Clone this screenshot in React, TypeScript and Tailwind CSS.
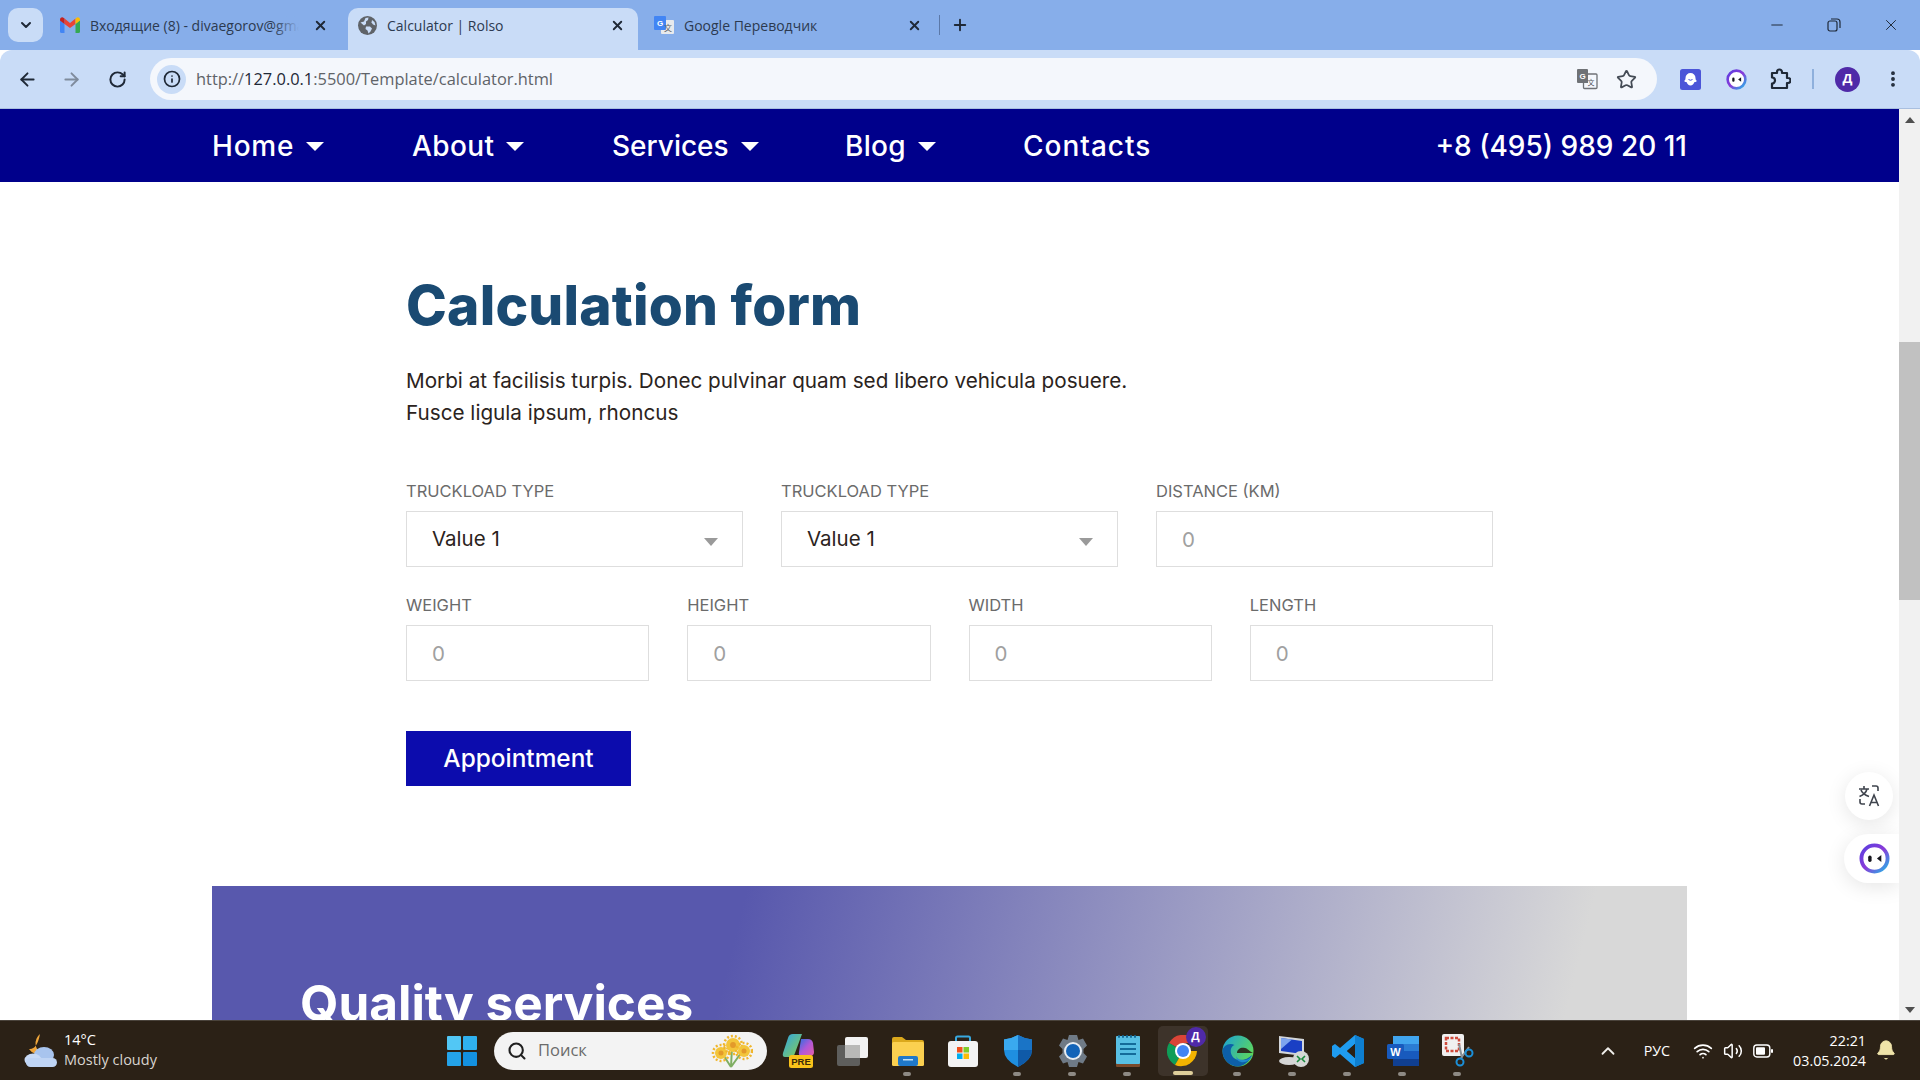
import {
  ArrowLeft,
  ArrowRight,
  Bell,
  ChevronDown,
  ChevronUp,
  EllipsisVertical,
  Info,
  Minus,
  Plus,
  RotateCw,
  Search,
  Star,
  Volume2,
  Wifi,
  X,
} from "lucide-react";

const body = "[font-family:Inter,sans-serif]";
const head = "[font-family:Inter,sans-serif]";
const ui = "[font-family:'Open_Sans',sans-serif]";

function GmailIcon() {
  return (
    <svg width="20" height="16" viewBox="0 0 20 16">
      <path d="M0 3v11.500q0 1.500 1.500 1.500H4.500V7z" fill="#4285f4" />
      <path d="M20 3v11.500q0 1.500-1.500 1.500H15.500V7z" fill="#34a853" />
      <path d="M4.500 7 10 11l5.500-4V1.500L10 6 4.500 1.500z" fill="#ea4335" />
      <path d="M0 3q0-3 3-2.600L4.500 1.500V7L0 3.500z" fill="#c5221f" />
      <path d="M20 3q0-3-3-2.600L15.500 1.500V7L20 3.500z" fill="#fbbc04" />
    </svg>
  );
}

function GlobeIcon() {
  return (
    <svg width="19" height="19" viewBox="0 0 19 19">
      <circle cx="9.500" cy="9.500" r="9.500" fill="#5f6368" />
      <path d="M2.500 6.500 6 5.500l1.500-3.500 3-.5-.5 2.500-2 1.500v2.500L6 9.500z" fill="#c9dcf7" />
      <path d="M8 10.500h4l2 2-1.500 3-2 2-1-3-2-1.500z" fill="#c9dcf7" />
      <path d="M14 4l2.500 2 1 3.500-2.500-1-1.500-2z" fill="#c9dcf7" />
    </svg>
  );
}

function TranslateTabIcon() {
  return (
    <svg width="22" height="22" viewBox="0 0 22 22">
      <rect x="8" y="6" width="13" height="14" rx="1" fill="#e8eaed" />
      <rect x="1" y="2" width="12" height="14" rx="1" fill="#4285f4" />
      <text x="7" y="12" fontSize="8" fill="#fff" textAnchor="middle" fontFamily="Liberation Sans" fontWeight="700">G</text>
      <text x="15" y="17" fontSize="8" fill="#5f6368" textAnchor="middle" fontFamily="Noto Sans CJK SC">文</text>
    </svg>
  );
}

function OmniTranslateIcon() {
  return (
    <svg width="22" height="22" viewBox="0 0 22 22">
      <rect x="7.500" y="6" width="13.500" height="14.500" rx="1" fill="#f4f7fc" stroke="#6f7276" strokeWidth="1.300" />
      <path d="M2 1h9q1 0 1 1v13H2q-1 0-1-1V2q0-1 1-1z" fill="#6f7276" />
      <text x="6.500" y="11" fontSize="8" fill="#fff" textAnchor="middle" fontFamily="Liberation Sans" fontWeight="700">G</text>
      <text x="15" y="16.500" fontSize="7" fill="#55585c" textAnchor="middle" fontFamily="Noto Sans CJK SC">文</text>
    </svg>
  );
}

function GhostExt() {
  return (
    <svg width="21" height="21" viewBox="0 0 21 21">
      <rect width="21" height="21" rx="2.500" fill="#4b55d8" />
      <path d="M10.500 4a5 5 0 0 1 5 5c0 1.500.5 2.500 1.500 3-1 1-2 1-2.500 1-.6 1.800-2.200 3.500-4 3.500s-3.400-1.700-4-3.500c-.5 0-1.500 0-2.500-1 1-.5 1.500-1.500 1.500-3a5 5 0 0 1 5-5z" fill="#fff" />
      <path d="M8.500 10.500q2 1.500 4 0" stroke="#4b55d8" fill="none" strokeWidth="1" />
    </svg>
  );
}

function ExtensionsIcon() {
  return (
    <svg width="22" height="22" viewBox="0 0 22 22" fill="none" stroke="#1f2937" strokeWidth="2.200" strokeLinejoin="round">
      <path d="M3 5h5V4a2.500 2.500 0 0 1 5 0v1h5v5h1a2.500 2.500 0 0 1 0 5h-1v5H3v-4.500a3 3 0 0 0 0-6z" />
    </svg>
  );
}

function FaceLogo({ size }: { size: number }) {
  return (
    <svg width={size} height={size} viewBox="0 0 32 32">
      <defs>
        <linearGradient id={`ring${size}`} x1="0" y1="0" x2="1" y2="1">
          <stop offset="0" stopColor="#5a3fe0" />
          <stop offset="0.5" stopColor="#8a3bd8" />
          <stop offset="1" stopColor="#22b8e8" />
        </linearGradient>
      </defs>
      <circle cx="16" cy="16" r="13.500" fill="#fff" stroke={`url(#ring${size})`} strokeWidth="4" />
      <rect x="9.500" y="13" width="3.500" height="6.500" rx="1.700" fill="#16161e" />
      <path d="M23 12.500 18.500 16l4.500 3.500z" fill="#16161e" />
    </svg>
  );
}

function WeatherIcon() {
  return (
    <svg width="36" height="38" viewBox="0 0 36 38">
      <path d="M17 2a12 12 0 0 0 2 20A12 12 0 0 1 6 17q8 1 11-15z" fill="#f0a63a" />
      <ellipse cx="21" cy="23" rx="10" ry="8" fill="#a8c4ee" />
      <ellipse cx="10" cy="28" rx="8.500" ry="6.500" fill="#c8daf6" />
      <rect x="3" y="26" width="31" height="9" rx="4.500" fill="#bfd4f4" />
    </svg>
  );
}

function WinLogo() {
  return (
    <svg width="30" height="30" viewBox="0 0 30 30">
      <rect width="14" height="14" x="0" y="0" rx="1" fill="#52c7f5" />
      <rect width="14" height="14" x="16" y="0" rx="1" fill="#2fb1ef" />
      <rect width="14" height="14" x="0" y="16" rx="1" fill="#24a3e9" />
      <rect width="14" height="14" x="16" y="16" rx="1" fill="#1391e0" />
    </svg>
  );
}

function Flowers() {
  return (
    <svg width="44" height="36" viewBox="0 0 44 36">
      <path d="M22 34 13 20M22 34l1-20M22 34l10-14" stroke="#7fae63" strokeWidth="2" fill="none" />
      {[
        [12, 20, 6],
        [24, 12, 7],
        [35, 18, 6],
      ].map(([cx, cy, r]) => (
        <g key={cx}>
          <circle cx={cx} cy={cy} r={r} fill="#f3c53a" />
          <circle cx={cx} cy={cy} r={r + 2} fill="none" stroke="#f0b62c" strokeWidth="2.500" strokeDasharray="2 2" />
          <circle cx={cx} cy={cy} r={r / 2.400} fill="#e39a2a" />
        </g>
      ))}
    </svg>
  );
}

function Copilot() {
  return (
    <svg width="32" height="36" viewBox="0 0 32 36">
      <defs>
        <linearGradient id="cpa" x1="0" y1="0" x2="1" y2="1">
          <stop offset="0" stopColor="#2ea4e8" />
          <stop offset="1" stopColor="#8bd04a" />
        </linearGradient>
        <linearGradient id="cpb" x1="0" y1="0" x2="1" y2="1">
          <stop offset="0" stopColor="#2b6fe0" />
          <stop offset="0.500" stopColor="#b158d8" />
          <stop offset="1" stopColor="#e55fa8" />
        </linearGradient>
      </defs>
      <path d="M11 1h9l-7 19q-1 4-5 4H3Q0 24 1 20L6 5q1-4 5-4z" fill="url(#cpa)" />
      <path d="M19 6h7q4 0 5 4l1 9q0 4-4 4h-8q-4 0-3-4z" fill="url(#cpb)" />
      <rect x="7" y="22" width="24" height="13" rx="2.500" fill="#f9c21a" />
      <text x="19" y="32" fontSize="9.500" fontWeight="700" textAnchor="middle" fill="#3a2a08" fontFamily="Liberation Sans">PRE</text>
    </svg>
  );
}

function TaskView() {
  return (
    <svg width="32" height="30" viewBox="0 0 32 30">
      <rect x="0" y="9" width="23" height="21" rx="2" fill="#5e5e5c" />
      <rect x="8" y="1" width="23" height="21" rx="2" fill="#f2f2f2" />
      <rect x="8" y="9" width="15" height="13" fill="#b9b9b7" />
    </svg>
  );
}

function Folder() {
  return (
    <svg width="32" height="30" viewBox="0 0 32 30">
      <path d="M0 3q0-2 2-2h8l4 3h16q2 0 2 2v4H0z" fill="#dba81c" />
      <rect y="6" width="32" height="24" rx="1.500" fill="#fbd050" />
      <rect x="6" y="20" width="20" height="10" rx="2" fill="#1f78c9" />
      <rect x="11" y="23" width="10" height="1.500" fill="#bfe0f7" />
    </svg>
  );
}

function StoreIcon() {
  return (
    <svg width="30" height="32" viewBox="0 0 30 32">
      <path d="M8 7V3q0-1.500 1.500-1.500h11Q22 1.500 22 3v4" stroke="#38a8de" strokeWidth="2" fill="none" />
      <rect y="6" width="30" height="26" rx="3" fill="#f3f3f3" />
      <rect x="9" y="12" width="5.500" height="5.500" fill="#f1511b" />
      <rect x="15.500" y="12" width="5.500" height="5.500" fill="#80cc28" />
      <rect x="9" y="18.500" width="5.500" height="5.500" fill="#00adef" />
      <rect x="15.500" y="18.500" width="5.500" height="5.500" fill="#fbbc09" />
    </svg>
  );
}

function Shield() {
  return (
    <svg width="30" height="32" viewBox="0 0 30 32">
      <path d="M15 0q7 4 14 4.500V15q0 10-14 17Q1 25 1 15V4.500Q8 4 15 0z" fill="#1f8fe0" />
      <path d="M15 0q7 4 14 4.500V15H15z" fill="#1a74c6" />
      <path d="M15 15h14q0 10-14 17z" fill="#0f5aa8" />
      <path d="M15 0q-7 4-14 4.500V15h14z" fill="#3aa9ef" />
    </svg>
  );
}

function Gear() {
  return (
    <svg width="32" height="32" viewBox="0 0 32 32">
      <path
        d="M12 0h8l1.500 5 4.500-1.500 4 7L26.500 14v4l3.500 3.500-4 7L21.500 27 20 32h-8l-1.500-5L6 28.500l-4-7L5.500 18v-4L2 10.500l4-7L10.500 5z"
        fill="#6f7a86"
      />
      <circle cx="16" cy="16" r="9" fill="#e8edf2" />
      <circle cx="16" cy="16" r="7" fill="#1364b8" />
    </svg>
  );
}

function Notepad() {
  return (
    <svg width="24" height="32" viewBox="0 0 24 32">
      <rect y="1" width="24" height="31" rx="1" fill="#7a4a2b" />
      <rect y="1" width="24" height="28" rx="1" fill="#58c0e4" />
      <path d="M4 9h16M4 14h16M4 19h16" stroke="#146c9a" strokeWidth="2" />
      <path d="M2 1.500h20" stroke="#146c9a" strokeWidth="2.500" strokeDasharray="2 2" />
    </svg>
  );
}

function Chrome() {
  return (
    <svg width="32" height="32" viewBox="0 0 32 32">
      <path d="M16 16 2.100 8A16 16 0 0 1 30 8H16z" fill="#db4437" />
      <path d="M16 16 8 30A16 16 0 0 1 2.100 8z" fill="#0f9d58" />
      <path d="M16 16h14A16 16 0 0 1 8 30z" fill="#f4b400" />
      <circle cx="16" cy="16" r="8" fill="#fff" />
      <circle cx="16" cy="16" r="6" fill="#4285f4" />
    </svg>
  );
}

function Edge() {
  return (
    <svg width="32" height="32" viewBox="0 0 32 32">
      <defs>
        <linearGradient id="eg" x1="0" y1="0" x2="1" y2="0.600">
          <stop offset="0" stopColor="#1aa0d8" />
          <stop offset="1" stopColor="#5ed85a" />
        </linearGradient>
      </defs>
      <circle cx="16" cy="16" r="15.500" fill="url(#eg)" />
      <path d="M30 20c-3 8-10 11.500-14 11.500C8 31.500.500 25 .500 16c0-5 7-9 12-6C6 12 8 25 18 25c5 0 9-2 12-5z" fill="#0d5fa8" />
      <path d="M31 18H15c0-4 4-6 8-5 3 .8 4 3 8 5" fill="#2b2116" opacity="0.900" />
      <path d="M14 21c1 3 4 4 8 4 3 0 6-1 8-5-1 5-6 8-11 7-3-.6-5-3-5-6z" fill="#1f8ad0" />
    </svg>
  );
}

function Rdp() {
  return (
    <svg width="32" height="32" viewBox="0 0 32 32">
      <path d="M2 1 27 4v17L2 18z" fill="#d3d6da" />
      <path d="M4 3 25 6v13L4 16z" fill="#1a3fc4" />
      <path d="M4 3 15 4.500 4 14z" fill="#7fa5ee" />
      <ellipse cx="12" cy="26" rx="10" ry="4" fill="#d5d5d5" />
      <circle cx="24" cy="24" r="8" fill="#d5d7d5" />
      <path d="M20 21l3 3-3 3M28 21l-3 3 3 3" stroke="#17893a" strokeWidth="1.600" fill="none" />
    </svg>
  );
}

function VsCode() {
  return (
    <svg width="32" height="32" viewBox="0 0 32 32">
      <path d="M23 0 32 4v24l-9 4-15-13-5 4-3-2V11l3-2 5 4zM23 9l-8 7 8 7z" fill="#1f9cf0" fillRule="evenodd" />
      <path d="M23 0 32 4v24l-9 4z" fill="#0e7fd0" />
      <path d="M23 9l-8 7 8 7z" fill="#2b2116" />
    </svg>
  );
}

function Word() {
  return (
    <svg width="32" height="30" viewBox="0 0 32 30">
      <rect x="6" width="26" height="30" rx="1.500" fill="#2b7cd3" />
      <rect x="6" width="26" height="8" fill="#41a5ee" />
      <rect x="6" y="15" width="26" height="8" fill="#185abd" />
      <rect x="6" y="23" width="26" height="7" fill="#103f91" />
      <rect y="8" width="17" height="15" rx="1.500" fill="#185abd" />
      <text x="8.500" y="20" fontSize="11" fontWeight="700" textAnchor="middle" fill="#fff" fontFamily="Liberation Sans">W</text>
    </svg>
  );
}

function Snip() {
  return (
    <svg width="32" height="34" viewBox="0 0 32 34">
      <rect width="22" height="22" rx="2" fill="#f0f0f0" />
      <rect x="4" y="4" width="13" height="13" fill="none" stroke="#cf4b3c" strokeWidth="2.500" strokeDasharray="3 1.500" />
      <path d="M17 10 20 24M27 13 19 24" stroke="#8a9097" strokeWidth="2" />
      <circle cx="18" cy="28" r="3.500" fill="none" stroke="#1b8fd8" strokeWidth="2" />
      <circle cx="27" cy="19" r="3.500" fill="none" stroke="#1b8fd8" strokeWidth="2" />
    </svg>
  );
}

function Tab({ icon, title, active, fade }: { icon: React.ReactNode; title: string; active?: boolean; fade?: boolean }) {
  return (
    <div className={`flex items-center h-[42px] w-[290px] pb-[8px] pl-[7px] pr-[13px] rounded-t-[10px] ${active ? "bg-[#c9dcf7]" : ""}`}>
      <div className="w-[24px] flex justify-center shrink-0">{icon}</div>
      <span className={`ml-[8px] flex-1 overflow-hidden whitespace-nowrap text-[14px] text-[#2c3a50] ${ui}`}>
        {title}
      </span>
      {fade ? <div className="w-[26px] h-[20px] -ml-[26px] bg-gradient-to-r from-transparent to-[#87aeea]" /> : null}
      <X size={15} strokeWidth={3} className="ml-[14px] text-[#1f2937] shrink-0" />
    </div>
  );
}

function BrowserChrome() {
  return (
    <div className="shrink-0">
      <div className="h-[50px] bg-[#87aeea] flex items-end pl-[8px]">
        <div className="self-start mt-[8px] w-[35px] h-[34px] rounded-[10px] bg-[#c9dcf7] flex items-center justify-center mr-[8px]">
          <ChevronDown size={16} strokeWidth={3} className="text-[#1f2937]" />
        </div>
        <div className="flex gap-[7px]">
          <Tab icon={<GmailIcon />} title="Входящие (8) - divaegorov@gmail.com" fade />
          <Tab icon={<GlobeIcon />} title="Calculator | Rolso" active />
          <Tab icon={<TranslateTabIcon />} title="Google Переводчик" />
        </div>
        <div className="self-start mt-[15px] w-[1px] h-[20px] bg-[#5b78a8] ml-[4px]" />
        <Plus size={18} strokeWidth={2.500} className="self-start mt-[16px] ml-[11px] text-[#1f2937]" />
        <div className="flex-1" />
        <div className="self-start h-[50px] flex items-center pr-[20px] gap-[41px] text-[#1f2937]">
          <Minus size={18} strokeWidth={1.300} />
          <svg width="14" height="14" viewBox="0 0 14 14" fill="none" stroke="currentColor" strokeWidth="1.200">
            <rect x="1" y="3" width="9" height="10" rx="2" />
            <path d="M4 1h6q3 0 3 3v6" />
          </svg>
          <X size={18} strokeWidth={1.300} />
        </div>
      </div>
      <div className="h-[59px] bg-[#c9dcf7] rounded-t-[12px] flex items-center border-b border-b-[#a9bfdf] pl-[17px] pr-[16px]">
        <ArrowLeft size={21} strokeWidth={2.200} className="text-[#1f2937]" />
        <ArrowRight size={21} strokeWidth={2.200} className="ml-[23px] text-[#7f8b9c]" />
        <RotateCw size={19} strokeWidth={2.500} className="ml-[26px] text-[#1f2937]" />
        <div className="ml-[23px] w-[1507px] h-[42px] rounded-full bg-[#f4f7fc] flex items-center pl-[7px] pr-[20px]">
          <div className="w-[29px] h-[29px] rounded-full bg-[#c9dcf7] flex items-center justify-center">
            <Info size={18} strokeWidth={2.300} className="text-[#1f2937]" />
          </div>
          <span className={`ml-[10px] text-[16.4px] text-[#5f6368] ${ui}`}>
            http://<span className="text-[#1f2937]">127.0.0.1</span>:5500/Template/calculator.html
          </span>
          <div className="flex-1" />
          <OmniTranslateIcon />
          <Star size={21} strokeWidth={2} className="ml-[18px] text-[#444b55]" />
        </div>
        <div className="ml-[23px]"><GhostExt /></div>
        <div className="ml-[25px]"><FaceLogo size={21} /></div>
        <div className="ml-[22px]"><ExtensionsIcon /></div>
        <div className="ml-[21px] w-[2px] h-[20px] bg-[#8fb0dc]" />
        <div className="ml-[21px] w-[25px] h-[25px] rounded-full bg-[#4f2aa8] flex items-center justify-center text-[13px] font-bold text-white [font-family:'Open_Sans',sans-serif]">
          Д
        </div>
        <EllipsisVertical size={20} strokeWidth={2.600} className="ml-[23px] text-[#1f2937]" />
      </div>
    </div>
  );
}

function NavItem({ label, width, track }: { label: string; width: string; track?: string }) {
  return (
    <div className={`flex items-center ${width}`}>
      <span className={track}>{label}</span>
      <span className="ml-[12px] mt-[2px] w-0 h-0 border-x-[9px] border-x-transparent border-t-[9px] border-t-white" />
    </div>
  );
}

function FieldLabel({ children }: { children: React.ReactNode }) {
  return <label className={`block h-[20px] mb-[10px] text-[16.5px] leading-[20px] text-[#6b6b6b] ${body}`}>{children}</label>;
}

function SelectField({ label }: { label: string }) {
  return (
    <div>
      <FieldLabel>{label}</FieldLabel>
      <div className="relative">
        <select className={`appearance-none w-full h-[56px] border border-[#dedede] bg-white pl-[25px] text-[20.5px] text-[#2b2320] outline-none ${body}`}>
          <option>Value 1</option>
        </select>
        <span className="absolute right-[25px] top-[27px] w-0 h-0 border-x-[7px] border-x-transparent border-t-[8px] border-t-[#9a9a9a]" />
      </div>
    </div>
  );
}

function NumberField({ label }: { label: string }) {
  return (
    <div>
      <FieldLabel>{label}</FieldLabel>
      <input
        placeholder="0"
        className={`w-full h-[56px] border border-[#dedede] bg-white pl-[25px] text-[20.5px] placeholder:text-[#a0a0a0] outline-none ${body}`}
      />
    </div>
  );
}

function PageContent() {
  return (
    <div className="relative flex-1 min-w-0 h-full overflow-hidden bg-white">
      <div className={`h-[73px] bg-[#00008b] flex items-center px-[212px] text-[28px] font-medium text-white ${head}`}>
        <NavItem label="Home" width="w-[200px]" track="tracking-[0.8px]" />
        <NavItem label="About" width="w-[200px]" track="tracking-[0.4px]" />
        <NavItem label="Services" width="w-[233px]" />
        <NavItem label="Blog" width="w-[178px]" track="tracking-[0.3px]" />
        <span className="tracking-[1px]">Contacts</span>
        <span className="ml-auto">+8 (495) 989 20 11</span>
      </div>

      <div className="pl-[406px] w-[1493px] box-content">
        <h1 className={`mt-[91px] h-[64px] text-[55px] leading-[64px] font-extrabold tracking-[0.2px] text-[#1a4a72] ${head}`}>Calculation form</h1>
        <p className={`mt-[28px] text-[20.7px] leading-[32px] text-[#2b2320] ${body}`}>
          Morbi at facilisis turpis. Donec pulvinar quam sed libero vehicula posuere.
          <br />
          Fusce ligula ipsum, rhoncus
        </p>
        <div className="mt-[52px] grid grid-cols-3 gap-x-[38px] w-[1087px]">
          <SelectField label="TRUCKLOAD TYPE" />
          <SelectField label="TRUCKLOAD TYPE" />
          <NumberField label="DISTANCE (KM)" />
        </div>
        <div className="mt-[28px] grid grid-cols-4 gap-x-[38px] w-[1087px]">
          <NumberField label="WEIGHT" />
          <NumberField label="HEIGHT" />
          <NumberField label="WIDTH" />
          <NumberField label="LENGTH" />
        </div>
        <button className={`mt-[50px] block w-[225px] h-[55px] bg-[#0c0cad] text-white text-[24.4px] font-medium ${head}`}>
          Appointment
        </button>
      </div>

      <div className="mt-[100px] ml-[212px] w-[1475px] h-[400px] px-[88px] pt-[87px] bg-[linear-gradient(104deg,#5858ad_34%,#d8d8d8_88%)]">
        <h2 className={`text-[49.5px] leading-[60px] font-bold text-white ${head}`}>Quality services</h2>
      </div>

      <div className="absolute right-[6px] top-[663px] w-[48px] h-[48px] rounded-full bg-white shadow-[0_4px_20px_rgba(0,0,0,0.10)] flex items-center justify-center">
        <svg width="24" height="24" viewBox="0 0 24 24" fill="none" stroke="#3f444d" strokeWidth="1.600">
          <path d="M2 5h10M7 2v3M10 5c-1 4-3.500 6-7.500 7.500M4 6c1 3 3.500 5 8 6.500" />
          <path d="M15 2h4q2 0 2 2v3M3 15v3q0 2 2 2h3" />
          <path d="M12.500 22l4.500-11 4.500 11M14 18.500h6" />
        </svg>
      </div>
      <div className="absolute right-0 top-[725px] w-[55px] h-[49px] rounded-l-full bg-white shadow-[0_4px_20px_rgba(0,0,0,0.10)] flex items-center pl-[15px]">
        <FaceLogo size={31} />
      </div>
    </div>
  );
}

function Scrollbar() {
  return (
    <div className="shrink-0 w-[21px] h-full bg-[#f1f1f1] flex flex-col items-center pt-[8px]">
      <span className="w-0 h-0 border-x-[5px] border-x-transparent border-b-[6px] border-b-[#505050]" />
      <div className="mt-[219px] w-full h-[258px] bg-[#c1c1c1]" />
      <div className="flex-1" />
      <span className="mb-[7px] w-0 h-0 border-x-[5px] border-x-transparent border-t-[6px] border-t-[#505050]" />
    </div>
  );
}

const taskApps: { key: string; el: React.ReactNode; dot: boolean }[] = [
  { key: "copilot", el: <Copilot />, dot: false },
  { key: "view", el: <TaskView />, dot: false },
  { key: "folder", el: <Folder />, dot: true },
  { key: "store", el: <StoreIcon />, dot: false },
  { key: "shield", el: <Shield />, dot: true },
  { key: "gear", el: <Gear />, dot: true },
  { key: "notepad", el: <Notepad />, dot: true },
  { key: "edge", el: <Edge />, dot: true },
  { key: "rdp", el: <Rdp />, dot: true },
  { key: "code", el: <VsCode />, dot: true },
  { key: "word", el: <Word />, dot: true },
  { key: "snip", el: <Snip />, dot: true },
];

function TaskIcon({ el, dot }: { el: React.ReactNode; dot: boolean }) {
  return (
    <div className="relative w-[55px] h-[60px] flex items-center justify-center">
      {el}
      {dot ? <span className="absolute bottom-[5px] left-[23px] w-[8px] h-[4px] rounded-full bg-[#8e8a84]" /> : null}
    </div>
  );
}

function Taskbar() {
  return (
    <div className={`shrink-0 h-[60px] bg-[#2b2116] border-t border-t-[#4a433b] flex items-center text-white ${ui}`}>
      <div className="w-[447px] pl-[23px] flex items-center shrink-0">
        <WeatherIcon />
        <div className="ml-[5px] -mt-[2px] text-[14.5px] leading-[20px]">
          <div>14°C</div>
          <div className="text-[#d8d4cf]">Mostly cloudy</div>
        </div>
      </div>
      <WinLogo />
      <div className="ml-[17px] w-[273px] h-[38px] rounded-full bg-[#f3f3f3] flex items-center pl-[13px] pr-[14px] shrink-0">
        <Search size={20} strokeWidth={2.500} className="text-[#1f1f1f]" />
        <span className="ml-[11px] text-[16.5px] text-[#6b6b6b]">Поиск</span>
        <div className="flex-1" />
        <Flowers />
      </div>
      <div className="ml-[3px] flex shrink-0">
        {taskApps.slice(0, 7).map((a) => (
          <TaskIcon key={a.key} el={a.el} dot={a.dot} />
        ))}
        <div className="relative w-[50px] h-[50px] my-[5px] mx-[2.500px] rounded-[5px] bg-[#3d332a] flex items-center justify-center">
          <Chrome />
          <span className="absolute top-[1px] right-[2px] w-[20px] h-[20px] rounded-full bg-[#4f2aa8] text-[11px] font-bold flex items-center justify-center">
            Д
          </span>
          <span className="absolute bottom-[1px] left-[15px] w-[20px] h-[4px] rounded-full bg-[#dfcf9b]" />
        </div>
        {taskApps.slice(7).map((a) => (
          <TaskIcon key={a.key} el={a.el} dot={a.dot} />
        ))}
      </div>
      <div className="flex-1" />
      <ChevronUp size={22} strokeWidth={2} className="mr-[25px] text-[#f0eeea]" />
      <span className="text-[14.3px] mr-[23px]">РУС</span>
      <Wifi size={20} strokeWidth={2} className="mr-[10px]" />
      <Volume2 size={20} strokeWidth={1.800} className="mr-[10px]" />
      <svg width="20" height="14" viewBox="0 0 20 14" className="mr-[20px]">
        <rect x="0.800" y="1" width="16" height="12" rx="3" fill="none" stroke="#fff" strokeWidth="1.400" />
        <rect x="3" y="3.200" width="9" height="7.600" rx="1" fill="#fff" />
        <rect x="18" y="5" width="2" height="4" rx="1" fill="#fff" />
      </svg>
      <div className="text-right text-[14.3px] leading-[20px] mr-[9px]">
        <div>22:21</div>
        <div>03.05.2024</div>
      </div>
      <Bell size={22} fill="#efe3a8" strokeWidth={1} className="mr-[23px] -mt-[2px] text-[#efe3a8]" />
    </div>
  );
}

export default function App() {
  return (
    <div className="w-full h-screen flex flex-col overflow-hidden">
      <BrowserChrome />
      <div className="flex-1 min-h-0 flex">
        <PageContent />
        <Scrollbar />
      </div>
      <Taskbar />
    </div>
  );
}
